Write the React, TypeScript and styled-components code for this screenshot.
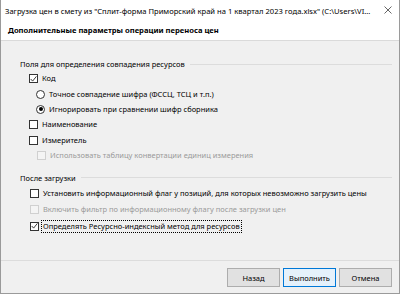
import React from "react";
import styled, { createGlobalStyle, css } from "styled-components";

const Global = createGlobalStyle`
  html, body { margin: 0; padding: 0; background: #ffffff; }
  body { font-family: "Noto Sans", "Open Sans", Arial, sans-serif; }
  * { box-sizing: border-box; }
`;

const Window = styled.div`
  width: 400px;
  height: 294px;
  border: 1px solid #9a9a9a;
  border-top: none;
  display: flex;
  flex-direction: column;
  background: #f0f0f0;
  color: #000;
  font-size: 7.5px;
  overflow: hidden;
`;

const TitleBar = styled.div`
  height: 20px;
  background: #fff;
  display: flex;
  align-items: center;
  justify-content: space-between;
  padding-left: 4px;
  padding-right: 7px;
`;

const TitleText = styled.div`
  font-size: 7.6px;
  white-space: nowrap;
  padding-top: 1px;
`;

const CloseBtn = styled.div`
  width: 8px;
  height: 8px;
  flex: none;
  display: flex;
  margin-top: -1px;
`;

const Header = styled.div`
  height: 21px;
  background: #fff;
  border-bottom: 1px solid #dadada;
  display: flex;
  align-items: center;
  padding-left: 7px;
  font-weight: 700;
  font-size: 7.6px;
`;

const Body = styled.div`
  flex: 1;
  padding: 16px 7px 0 19px;
  display: flex;
  flex-direction: column;
`;

const Group = styled.div<{ $gapTop?: number }>`
  display: flex;
  flex-direction: column;
  margin-top: ${(p) => p.$gapTop ?? 0}px;
`;

const GroupLabel = styled.div`
  height: 14px;
  display: flex;
  align-items: center;
  gap: 5px;
  white-space: nowrap;
  &::after {
    content: "";
    flex: 1;
    height: 1px;
    background: #dcdcdc;
  }
`;

const Row = styled.div<{ $indent: number; $h: number; $disabled?: boolean }>`
  height: ${(p) => p.$h}px;
  display: flex;
  align-items: center;
  padding-left: ${(p) => p.$indent}px;
  white-space: nowrap;
  color: ${(p) => (p.$disabled ? "#9a9a9a" : "#000")};
`;

const Box = styled.span<{ $disabled?: boolean }>`
  width: 9px;
  height: 9px;
  flex: none;
  border: 1px solid ${(p) => (p.$disabled ? "#d0d0d0" : "#333")};
  background: ${(p) => (p.$disabled ? "#f4f4f4" : "#fff")};
  display: flex;
  align-items: center;
  justify-content: center;
  margin-right: 3px;
`;

const Radio = styled.span<{ $on?: boolean }>`
  width: 9px;
  height: 9px;
  flex: none;
  border-radius: 50%;
  border: 1px solid #333;
  background: #fff;
  margin-right: 3px;
  display: flex;
  align-items: center;
  justify-content: center;
  ${(p) =>
    p.$on &&
    css`
      &::after {
        content: "";
        width: 4px;
        height: 4px;
        border-radius: 50%;
        background: #000;
      }
    `}
`;

const Label = styled.span<{ $focus?: boolean }>`
  padding: 0 1px;
  line-height: 11px;
  border: 1px ${(p) => (p.$focus ? "dotted #000" : "solid transparent")};
  margin-left: -1px;
`;

const Footer = styled.div`
  height: 33px;
  border-top: 1px solid #dcdcdc;
  display: flex;
  justify-content: flex-end;
  align-items: flex-start;
  padding: 7px 7px 0 0;
  gap: 3px;
`;

const Button = styled.div<{ $default?: boolean }>`
  width: 53px;
  height: 19px;
  display: flex;
  align-items: center;
  justify-content: center;
  font-size: 7.5px;
  background: ${(p) => (p.$default ? "#e5f1fb" : "#e1e1e1")};
  border: 1px solid ${(p) => (p.$default ? "#0078d7" : "#adadad")};
`;

const Check = () => (
  <svg width="8" height="8" viewBox="0 0 8 8">
    <polyline points="0.8,4 3,6.4 7.3,1" fill="none" stroke="#222" strokeWidth="1" />
  </svg>
);

type Item = {
  kind: "check" | "radio";
  text: string;
  indent: number;
  h: number;
  on?: boolean;
  disabled?: boolean;
  focus?: boolean;
};

const group1: Item[] = [
  { kind: "check", text: "Код", indent: 9, h: 15.5, on: true },
  { kind: "radio", text: "Точное совпадение шифра (ФССЦ, ТСЦ и т.п.)", indent: 16, h: 15.5 },
  { kind: "radio", text: "Игнорировать при сравнении шифр сборника", indent: 16, h: 14.5, on: true },
  { kind: "check", text: "Наименование", indent: 9, h: 15.5 },
  { kind: "check", text: "Измеритель", indent: 9, h: 16 },
  { kind: "check", text: "Использовать таблицу конвертации единиц измерения", indent: 17, h: 15.5, disabled: true },
];

const group2: Item[] = [
  { kind: "check", text: "Установить информационный флаг у позиций, для которых невозможно загрузить цены", indent: 10, h: 17 },
  { kind: "check", text: "Включить фильтр по информационному флагу после загрузки цен", indent: 10, h: 16.5, disabled: true },
  { kind: "check", text: "Определять Ресурсно-индексный метод для ресурсов", indent: 10, h: 16, on: true, focus: true },
];

const Option = ({ it }: { it: Item }) => (
  <Row $indent={it.indent} $h={it.h} $disabled={it.disabled}>
    {it.kind === "check" ? (
      <Box $disabled={it.disabled}>{it.on && <Check />}</Box>
    ) : (
      <Radio $on={it.on} />
    )}
    <Label $focus={it.focus}>{it.text}</Label>
  </Row>
);

export default function App() {
  return (
    <>
      <Global />
      <Window>
        <TitleBar>
          <TitleText>
            Загрузка цен в смету из "Сплит-форма Приморский край на 1 квартал 2023 года.xlsx" (C:\Users\VI...
          </TitleText>
          <CloseBtn>
            <svg width="8" height="8" viewBox="0 0 8 8">
              <path d="M0.5 0.5 L7.5 7.5 M7.5 0.5 L0.5 7.5" stroke="#555" strokeWidth="0.9" />
            </svg>
          </CloseBtn>
        </TitleBar>
        <Header>Дополнительные параметры операции переноса цен</Header>
        <Body>
          <Group>
            <GroupLabel>Поля для определения совпадения ресурсов</GroupLabel>
            {group1.map((it) => (
              <Option key={it.text} it={it} />
            ))}
          </Group>
          <Group $gapTop={7}>
            <GroupLabel>После загрузки</GroupLabel>
            {group2.map((it) => (
              <Option key={it.text} it={it} />
            ))}
          </Group>
        </Body>
        <Footer>
          <Button>Назад</Button>
          <Button $default>Выполнить</Button>
          <Button>Отмена</Button>
        </Footer>
      </Window>
    </>
  );
}
